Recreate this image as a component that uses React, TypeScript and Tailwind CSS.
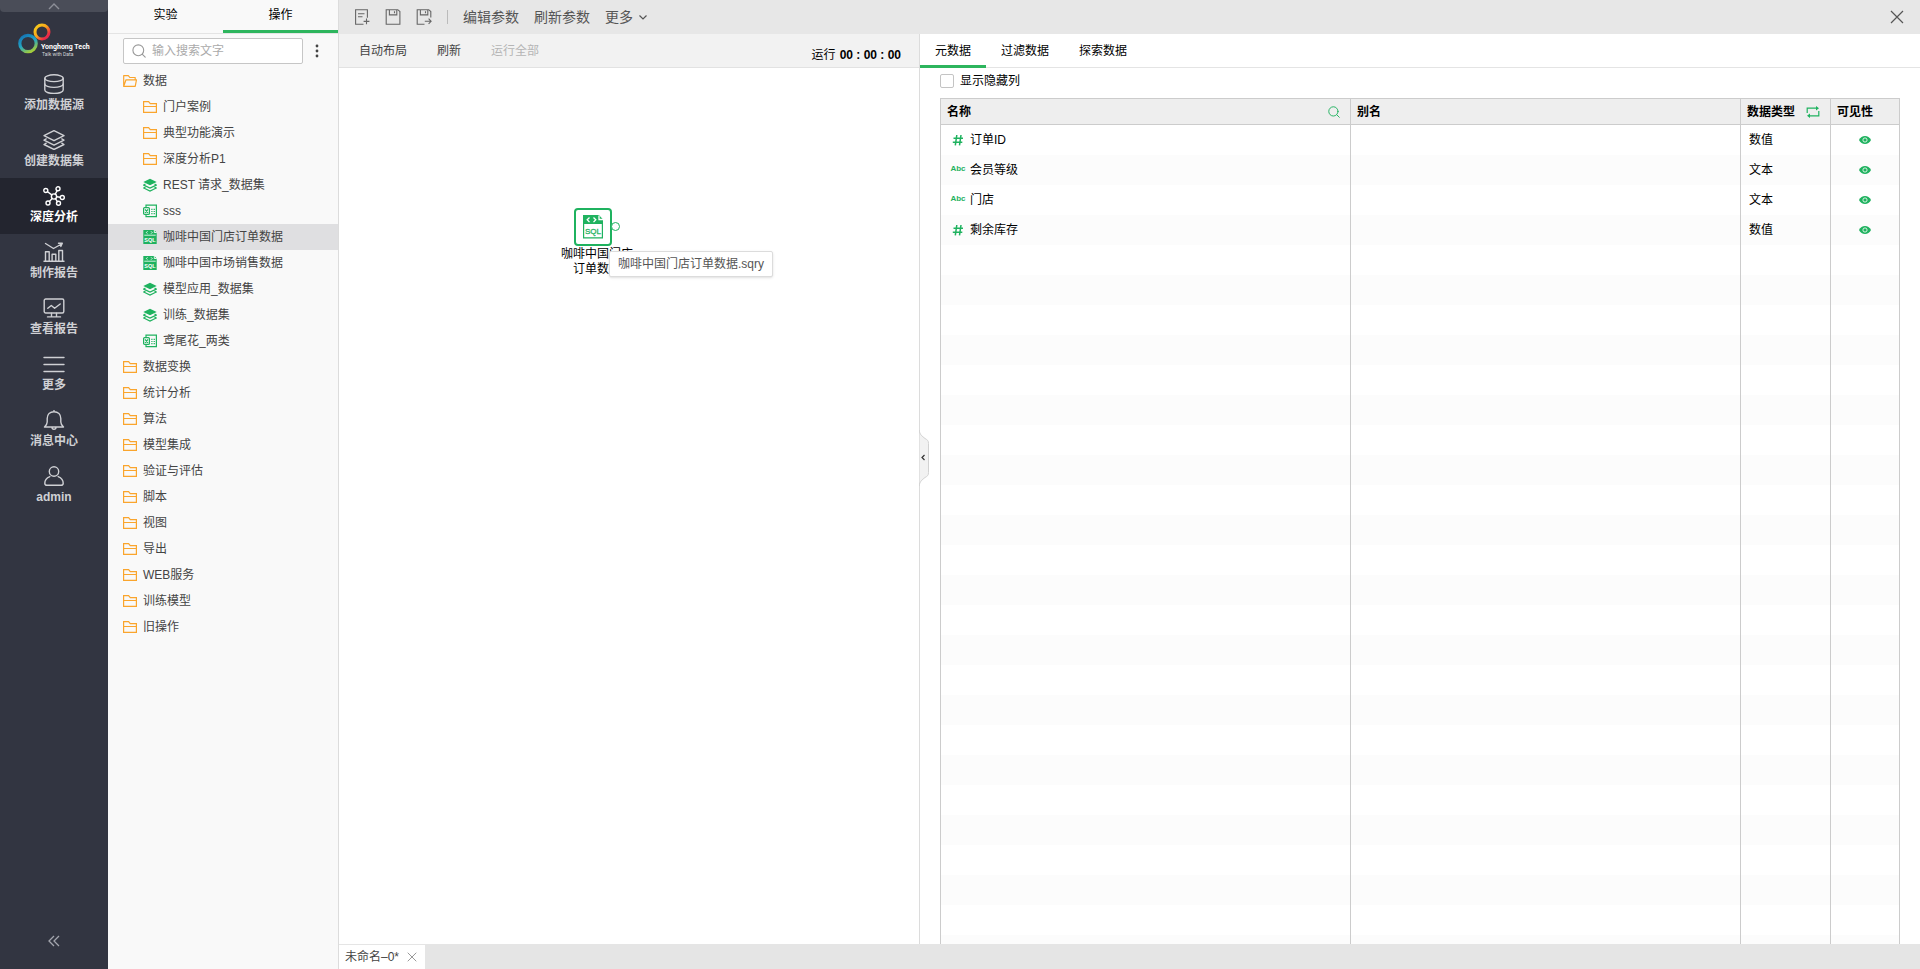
import React from "react";

type IconProps = { className?: string };

/* ---------- side navigation icons ---------- */

const NavSvg = ({ children }: { children: React.ReactNode }) => (
  <svg className="h-5 w-[22px]" viewBox="0 0 22 20" fill="none" stroke="currentColor" strokeWidth="1.4" strokeLinejoin="round" strokeLinecap="round">
    {children}
  </svg>
);

const DatabaseIcon = () => (
  <NavSvg>
    <ellipse cx="11" cy="4.2" rx="9.2" ry="3.4" />
    <path d="M1.8 4.2v11.9c0 1.9 4.1 3.4 9.2 3.4s9.2-1.500 9.200-3.400V4.200" />
    <path d="M1.800 10c0 1.900 4.100 3.400 9.200 3.400s9.200-1.500 9.200-3.400" />
  </NavSvg>
);

const LayersIcon = () => (
  <NavSvg>
    <path d="M11 .7 21 5.700 11 10.700 1 5.700z" />
    <path d="M3.200 8.900 1 10.100l10 5 10-5-2.200-1.200" />
    <path d="M3.200 13.200 1 14.500l10 5 10-5-2.200-1.300" />
  </NavSvg>
);

const GraphIcon = () => (
  <NavSvg>
    <circle cx="11" cy="10.500" r="2.600" />
    <circle cx="2.800" cy="4.500" r="2" />
    <circle cx="15" cy="2.800" r="2" />
    <circle cx="19.300" cy="11.500" r="2" />
    <circle cx="5" cy="17" r="2" />
    <circle cx="15.500" cy="17.300" r="2" />
    <path d="M4.500 5.700 8.800 8.900M14.200 4.700 12.200 8.100M13.600 10.800l3.700.5M9.200 12.500l-2.800 3M12.400 12.700l2 2.900" />
  </NavSvg>
);

const ReportIcon = () => (
  <NavSvg>
    <path d="M1 19.300h20M2.500 19V9.800h3.700V19M9.100 19v-6.800h3.700V19M15.800 19V8.500h3.700V19" />
    <path d="M2.500 1.500 10.500 6.500 18.500 2M15.500 1.200h3.800l-1.500 3.200" />
  </NavSvg>
);

const MonitorIcon = () => (
  <NavSvg>
    <rect x="1.200" y="1" width="19.600" height="14" rx="1.500" />
    <path d="M4.800 10.300 8.300 7.500l3.300 2.800 5.600-4.300M8.500 15.200v3.300M13.500 15.200v3.300M4.500 18.900h13" />
  </NavSvg>
);

const MoreIcon = () => (
  <NavSvg>
    <path d="M1 3.500h20M1 10.500h20M1 17.500h20" />
  </NavSvg>
);

const BellIcon = () => (
  <NavSvg>
    <path d="M1.500 17h19c-1.600-1.500-2.700-2.700-2.700-5V8.500C17.800 4.500 15 1.700 11 1.700S4.200 4.500 4.200 8.500V12c0 2.300-1.100 3.500-2.700 5zM11 .6v1M9 17.300c0 1.300.8 2 2 2s2-.7 2-2" />
  </NavSvg>
);

const UserIcon = () => (
  <NavSvg>
    <circle cx="11" cy="5.500" r="4.700" />
    <path d="M6.800 10.600C4 11.800 1.800 14.200 1.800 17.200c0 1.300.8 2.100 2.200 2.100h14c1.400 0 2.200-.8 2.200-2.100 0-3-2.200-5.400-5-6.600" />
  </NavSvg>
);

const Logo = () => (
  <svg className="h-9 w-20" viewBox="0 0 80 36" role="img" aria-label="Yonghong Tech">
    <defs>
      <linearGradient id="ringTop" x1="0" y1="0" x2="1" y2="1">
        <stop offset="0" stopColor="#f6d21c" />
        <stop offset="0.450" stopColor="#f9a41b" />
        <stop offset="0.800" stopColor="#ee2b45" />
        <stop offset="1" stopColor="#d8245a" />
      </linearGradient>
      <linearGradient id="ringBottom" x1="0.200" y1="0" x2="0.700" y2="1">
        <stop offset="0" stopColor="#1576b5" />
        <stop offset="0.500" stopColor="#22a5c4" />
        <stop offset="1" stopColor="#a5cd39" />
      </linearGradient>
    </defs>
    <circle cx="28" cy="10" r="7" fill="none" stroke="url(#ringTop)" strokeWidth="3" />
    <circle cx="14" cy="21.500" r="8.200" fill="none" stroke="url(#ringBottom)" strokeWidth="3.200" />
    <text x="27" y="27" fill="#ffffff" fontSize="7" fontWeight="700" fontFamily="Roboto, 'Liberation Sans', sans-serif">Yonghong Tech</text>
    <text x="28" y="34" fill="#d5d6da" fontSize="5" fontFamily="Roboto, 'Liberation Sans', sans-serif">Talk with Data</text>
  </svg>
);

/* ---------- tree icons ---------- */

const FolderIcon = () => (
  <svg className="h-3.5 w-3.5 shrink-0" viewBox="0 0 14 14" fill="none" stroke="#faa52d" strokeWidth="1.200">
    <path d="M.6 12.400V1.600h5l1.700 2h6.100v8.800zM.6 6.500h12.800" />
  </svg>
);

const FolderOpenIcon = () => (
  <svg className="h-3.5 w-3.5 shrink-0" viewBox="0 0 14 14" fill="none" stroke="#faa52d" strokeWidth="1.200" strokeLinejoin="round">
    <path d="M.7 12.400V1.600h4.600l1.500 1.900h5.400v2.300M.7 12.400 3 5.800h10.500l-1.300 6.600z" />
  </svg>
);

const DatasetIcon = () => (
  <svg className="h-3.5 w-3.5 shrink-0" viewBox="0 0 14 14" fill="none" stroke="#1fb25f" strokeWidth="1.200">
    <path d="M7 .8 13.700 4 7 7.200.3 4z" fill="#1fb25f" stroke="none" />
    <path d="M2.500 6.100.7 7.100 7 10.100l6.300-3-1.800-1M2.500 9 .7 10 7 13l6.300-3-1.800-1" />
  </svg>
);

const ExcelIcon = () => (
  <svg className="h-3.5 w-3.5 shrink-0" viewBox="0 0 14 14" fill="none" stroke="#1fb25f" strokeWidth="1.200">
    <path d="M3 3.200V1.200h10.400v11.400H3v-1.800" />
    <rect x=".6" y="3.600" width="5.800" height="6.800" rx="1" />
    <path d="m2 5.300 3 3.600M5 5.300 2 8.900M8.300 5.300h1.200M10.600 5.300h1.300M8.300 7.500h1.200M10.600 7.500h1.300M8.300 9.700h1.200M10.600 9.700h1.300" />
  </svg>
);

const SqlIcon = () => (
  <svg className="h-3.5 w-3.5 shrink-0" viewBox="0 0 14 14">
    <path d="M.3 0h11l2.400 2.500V14H.3z" fill="#1fb25f" />
    <path d="M4.500 1.300 3.300 2.500l1.200 1.200M8 1.300l1.200 1.200L8 3.700M11.300 0v2.500h2.400" fill="none" stroke="#fff" strokeWidth=".9" />
    <path d="M1.300 5.200h11.400" stroke="#fff" strokeWidth=".8" />
    <text x="7" y="11.700" fill="#fff" fontSize="5.500" fontWeight="700" textAnchor="middle" fontFamily="'Liberation Sans', sans-serif">SQL</text>
  </svg>
);

const SearchIcon = ({ className }: IconProps) => (
  <svg className={className} viewBox="0 0 14 14" fill="none" stroke="currentColor" strokeWidth="1.100" strokeLinecap="round">
    <circle cx="6.300" cy="6.300" r="5.400" />
    <path d="m10.400 10.400 2.800 2.800" />
  </svg>
);

const CloseIcon = ({ className }: IconProps) => (
  <svg className={className} viewBox="0 0 14 14" fill="none" stroke="currentColor" strokeWidth="1.200">
    <path d="m1 1 12 12M13 1 1 13" />
  </svg>
);

const EyeIcon = () => (
  <svg className="h-3 w-3" viewBox="0 0 12 12">
    <path d="M0 6c1.300-2.500 3.500-4 6-4s4.700 1.500 6 4c-1.300 2.500-3.500 4-6 4S1.300 8.500 0 6z" fill="#1fb25f" />
    <circle cx="6" cy="6" r="2.100" fill="none" stroke="#fff" strokeWidth=".8" />
  </svg>
);

/* ---------- data ---------- */

const navItems = [
  { label: "添加数据源", Icon: DatabaseIcon },
  { label: "创建数据集", Icon: LayersIcon },
  { label: "深度分析", Icon: GraphIcon, active: true },
  { label: "制作报告", Icon: ReportIcon },
  { label: "查看报告", Icon: MonitorIcon },
  { label: "更多", Icon: MoreIcon },
  { label: "消息中心", Icon: BellIcon },
  { label: "admin", Icon: UserIcon },
];

const treeItems = [
  { label: "数据", Icon: FolderOpenIcon },
  { label: "门户案例", Icon: FolderIcon, child: true },
  { label: "典型功能演示", Icon: FolderIcon, child: true },
  { label: "深度分析P1", Icon: FolderIcon, child: true },
  { label: "REST 请求_数据集", Icon: DatasetIcon, child: true },
  { label: "sss", Icon: ExcelIcon, child: true },
  { label: "咖啡中国门店订单数据", Icon: SqlIcon, child: true, selected: true },
  { label: "咖啡中国市场销售数据", Icon: SqlIcon, child: true },
  { label: "模型应用_数据集", Icon: DatasetIcon, child: true },
  { label: "训练_数据集", Icon: DatasetIcon, child: true },
  { label: "鸢尾花_两类", Icon: ExcelIcon, child: true },
  { label: "数据变换", Icon: FolderIcon },
  { label: "统计分析", Icon: FolderIcon },
  { label: "算法", Icon: FolderIcon },
  { label: "模型集成", Icon: FolderIcon },
  { label: "验证与评估", Icon: FolderIcon },
  { label: "脚本", Icon: FolderIcon },
  { label: "视图", Icon: FolderIcon },
  { label: "导出", Icon: FolderIcon },
  { label: "WEB服务", Icon: FolderIcon },
  { label: "训练模型", Icon: FolderIcon },
  { label: "旧操作", Icon: FolderIcon },
];

const columns = [
  { name: "订单ID", type: "数值" },
  { name: "会员等级", type: "文本" },
  { name: "门店", type: "文本" },
  { name: "剩余库存", type: "数值" },
];

const fillerRows = Array.from({ length: 24 }, (_, i) => i);

/* ---------- sections ---------- */

const SideNav = () => (
  <nav className="flex w-[108px] shrink-0 flex-col bg-[#323541]">
    <button aria-label="收起" className="flex h-3 items-center justify-center rounded-b-sm bg-[#4a4d58] text-[#8d8f98]">
      <svg className="h-2 w-3" viewBox="0 0 12 8" fill="none" stroke="currentColor" strokeWidth="1.400">
        <path d="m1 7 5-5 5 5" />
      </svg>
    </button>
    <div className="flex h-[54px] items-center pt-0.5 pl-3.5">
      <Logo />
    </div>
    {navItems.map(({ label, Icon, active }) => (
      <button
        key={label}
        className={
          active
            ? "flex h-14 flex-col items-center gap-[3px] bg-[#23252f] pt-2 text-white"
            : "flex h-14 flex-col items-center gap-[3px] pt-2 text-[#cfd0d4]"
        }
      >
        <Icon />
        <span className="text-xs leading-4 font-bold">{label}</span>
      </button>
    ))}
    <button aria-label="折叠菜单" className="mt-auto mb-5 flex h-4 items-center justify-center text-[#a3a5ad]">
      <svg className="h-3 w-3" viewBox="0 0 12 12" fill="none" stroke="currentColor" strokeWidth="1.300">
        <path d="M6 1 1 6l5 5M11 1 6 6l5 5" />
      </svg>
    </button>
  </nav>
);

const OperationPanel = () => (
  <aside className="flex w-[231px] shrink-0 flex-col border-r border-[#dcdcdc] bg-[#f9f9f9] text-xs">
    <div className="flex h-[34px] shrink-0 border-b border-[#e4e4e4] text-black">
      <button className="flex-1 pb-1">实验</button>
      <button className="flex-1 border-b-3 border-[#2db55d]">操作</button>
    </div>
    <div className="flex h-[34px] shrink-0 items-center pl-[15px]">
      <label className="flex h-[26px] w-[180px] items-center gap-1.5 rounded-xs border border-[#c6c6c6] bg-white px-2">
        <SearchIcon className="h-3.5 w-3.5 shrink-0 text-[#999]" />
        <input
          type="text"
          aria-label="搜索"
          placeholder="输入搜索文字"
          className="min-w-0 flex-1 bg-transparent text-xs outline-none placeholder:text-[#aaa]"
        />
      </label>
      <button aria-label="菜单" className="flex h-5 w-7 items-center justify-center text-[#444]">
        <svg className="h-3.5 w-1" viewBox="0 0 4 14" fill="currentColor">
          <circle cx="2" cy="2" r="1.400" />
          <circle cx="2" cy="7" r="1.400" />
          <circle cx="2" cy="12" r="1.400" />
        </svg>
      </button>
    </div>
    <ul className="text-[#444]">
      {treeItems.map(({ label, Icon, child, selected }) => (
        <li key={label}>
          <button
            className={
              selected
                ? "flex h-[26px] w-full items-center gap-1.5 bg-[#dfdfe1] pl-[35px]"
                : child
                  ? "flex h-[26px] w-full items-center gap-1.5 pl-[35px]"
                  : "flex h-[26px] w-full items-center gap-1.5 pl-[15px]"
            }
          >
            <Icon />
            <span>{label}</span>
          </button>
        </li>
      ))}
    </ul>
  </aside>
);

const Toolbar = () => (
  <header className="flex h-[34px] shrink-0 items-center bg-[#e7e7e7] pr-4 pl-[15px] text-sm text-[#555]">
    <div className="flex items-center gap-[15px] text-[#666]">
      <button aria-label="新建">
        <svg className="h-4 w-4" viewBox="0 0 16 16" fill="none" stroke="currentColor" strokeWidth="1.100">
          <path d="M9.500 15.300H1.600V.7h11.800v8M4 4.700h6.500M4 7.800h4.500M12.500 9.500v5.800M9.600 12.400h5.800" />
        </svg>
      </button>
      <button aria-label="保存">
        <svg className="h-4 w-4" viewBox="0 0 16 16" fill="none" stroke="currentColor" strokeWidth="1.100">
          <path d="M2 .7h10.800l2.100 1.800v12.800H1.200V.7zM4.400.7v5.200h7.400V.7M9.500 2.200v2" />
        </svg>
      </button>
      <button aria-label="另存为">
        <svg className="h-4 w-4" viewBox="0 0 16 16" fill="none" stroke="currentColor" strokeWidth="1.100">
          <path d="M8.500 15.300H1.200V.7h11.500l2.100 1.800v6M4.400.7v5.200h7.400V.7M9.500 2.200v2M8.800 12.300h6M12.600 9.700l2.500 2.600-2.500 2.600" />
        </svg>
      </button>
    </div>
    <div className="mx-[15px] h-3.5 w-px bg-[#bbb]" />
    <div className="flex items-center gap-[15px]">
      <button>编辑参数</button>
      <button>刷新参数</button>
      <button className="flex items-center gap-1.5">
        更多
        <svg className="h-2 w-2" viewBox="0 0 8 8" fill="none" stroke="currentColor" strokeWidth="1.200">
          <path d="m.5 2.500 3.500 3.500 3.500-3.500" />
        </svg>
      </button>
    </div>
    <button aria-label="关闭" className="ml-auto">
      <CloseIcon className="h-3.5 w-3.5" />
    </button>
  </header>
);

const Canvas = () => (
  <section className="flex w-[581px] shrink-0 flex-col border-r border-[#dcdcdc]">
    <div className="flex h-[34px] shrink-0 items-center border-b border-[#e2e2e2] bg-[#f2f2f2] pr-[18px] pl-5 text-xs">
      <div className="flex gap-[30px] text-[#444]">
        <button>自动布局</button>
        <button>刷新</button>
        <button disabled className="text-[#b5b5b5]">运行全部</button>
      </div>
      <div className="ml-auto flex gap-1 pt-2 text-black">
        <span>运行</span>
        <span className="font-bold">00 : 00 : 00</span>
      </div>
    </div>
    <div className="relative flex-1 overflow-hidden bg-white text-xs">
      <div className="absolute top-[140px] left-[235px] flex h-[38px] w-[38px] items-center justify-center rounded border-2 border-[#1fb25f] bg-white">
        <svg className="h-6 w-5" viewBox="0 0 20 24">
          <path d="M0 0h16l4 4.500V9H0z" fill="#1fb25f" />
          <path d="M.6 8.500v14.400h18.800V8.500" fill="none" stroke="#1fb25f" strokeWidth="1.200" />
          <path d="M6.500 2.500 4.200 4.800l2.300 2.300M10.500 2.500l2.300 2.300-2.300 2.300M16 .5v4h4" fill="none" stroke="#fff" strokeWidth="1.300" />
          <text x="10" y="18.500" fill="#1fb25f" stroke="#1fb25f" strokeWidth="0.300" fontSize="8" textAnchor="middle" fontFamily="'Liberation Sans', sans-serif">SQL</text>
        </svg>
      </div>
      <div className="absolute top-[154px] left-[272px] h-[9px] w-[9px] rounded-full border border-[#1fb25f] bg-white" />
      <p className="absolute top-[179px] left-[222px] w-[72px] text-center leading-[15px] break-all text-black">咖啡中国门店订单数据</p>
      <div role="tooltip" className="absolute top-[183px] left-[270px] rounded-xs border border-[#dcdcdc] bg-white px-2 py-1 leading-4 whitespace-nowrap text-[#555] shadow-sm">
        咖啡中国门店订单数据.sqry
      </div>
    </div>
  </section>
);

const MetadataPanel = () => (
  <section className="relative flex min-w-0 flex-1 flex-col bg-white text-xs text-black">
    <div className="flex h-[34px] shrink-0 border-b border-[#e4e4e4]">
      <button className="-mb-px border-b-3 border-[#2db55d] px-[15px] pt-[3px]">元数据</button>
      <button className="px-[15px]">过滤数据</button>
      <button className="px-[15px]">探索数据</button>
    </div>
    <button aria-label="展开" className="absolute top-[396px] -left-px h-14 w-2.5 text-[#333]">
      <svg className="h-14 w-2.5" viewBox="0 0 10 56" fill="none">
        <path d="M0 0C1 5 3 6 6 8.500c2.500 1.500 3.500 2 3.500 5v29c0 3-1 3.500-3.500 5C3 50 1 51 0 56z" fill="#f2f2f2" stroke="#d2d2d2" />
        <path d="m5.500 25-2.500 2.500L5.500 30" stroke="currentColor" strokeWidth="1.200" />
      </svg>
    </button>
    <div className="flex min-h-0 flex-1 flex-col px-5">
      <label className="flex h-[30px] shrink-0 items-center gap-1.5 pb-1">
        <input type="checkbox" className="h-3.5 w-3.5 appearance-none rounded-xs border border-[#c4c4c4] bg-white" />
        显示隐藏列
      </label>
      <div className="min-h-0 flex-1 overflow-hidden">
        <table className="w-full table-fixed border-collapse border border-[#ccc]">
          <colgroup>
            <col className="w-[410px]" />
            <col />
            <col className="w-[90px]" />
            <col className="w-[69px]" />
          </colgroup>
          <thead>
            <tr className="h-[26px] bg-[#eee] text-left">
              <th className="border border-[#ccc] p-0 px-1.5">
                <div className="flex items-center justify-between pr-1">
                  名称
                  <button aria-label="搜索名称" className="text-[#1fb25f]">
                    <SearchIcon className="h-3 w-3" />
                  </button>
                </div>
              </th>
              <th className="border border-[#ccc] p-0 px-1.5">别名</th>
              <th className="border border-[#ccc] p-0 px-1.5">
                <div className="flex items-center justify-between pr-1">
                  数据类型
                  <button aria-label="切换类型">
                    <svg className="h-3 w-3.5" viewBox="0 0 14 12" fill="none" stroke="#1fb25f" strokeWidth="1.200">
                      <path d="M1.200 7V2.200H11M12.800 5v4.800H3" />
                      <path d="m10 0 3 2.200-3 2.200zM4 7.600 1 9.800 4 12z" fill="#1fb25f" stroke="none" />
                    </svg>
                  </button>
                </div>
              </th>
              <th className="border border-[#ccc] p-0 px-1.5">可见性</th>
            </tr>
          </thead>
          <tbody>
            {columns.map(({ name, type }) => (
              <tr key={name} className="h-[30px] even:bg-[#fcfcfc]">
                <td className="border-x border-[#ccc] p-0 pl-[9px]">
                  <div className="flex items-center gap-1">
                    {type === "数值" ? (
                      <svg className="h-3.5 w-4" viewBox="0 0 16 14" fill="none" stroke="#1fb25f" strokeWidth="1.500">
                        <path d="M6.800 2 5.300 12.300M11 2 9.500 12.300M3.500 5.200h9.500M2.800 9.200h9.500" />
                      </svg>
                    ) : (
                      <span className="w-4 text-center text-[8px] font-bold text-[#1fb25f]">Abc</span>
                    )}
                    {name}
                  </div>
                </td>
                <td className="border-x border-[#ccc] p-0" />
                <td className="border-x border-[#ccc] p-0 pl-2">{type}</td>
                <td className="border-x border-[#ccc] p-0">
                  <button aria-label={`${name}可见性`} className="mx-auto flex">
                    <EyeIcon />
                  </button>
                </td>
              </tr>
            ))}
            {fillerRows.map((row) => (
              <tr key={row} className="h-[30px] even:bg-[#fcfcfc]">
                <td className="border-x border-[#ccc] p-0" />
                <td className="border-x border-[#ccc] p-0" />
                <td className="border-x border-[#ccc] p-0" />
                <td className="border-x border-[#ccc] p-0" />
              </tr>
            ))}
          </tbody>
        </table>
      </div>
    </div>
  </section>
);

export default function App() {
  return (
    <div className="flex h-screen overflow-hidden bg-white font-['Liberation_Sans','Noto_Sans_CJK_SC',sans-serif]">
      <SideNav />
      <OperationPanel />
      <main className="flex min-w-0 flex-1 flex-col">
        <Toolbar />
        <div className="flex min-h-0 flex-1">
          <Canvas />
          <MetadataPanel />
        </div>
        <footer className="flex h-[25px] shrink-0 bg-[#e5e5e5] text-xs text-[#444]">
          <div className="flex items-center gap-2 border-t border-[#e5e5e5] bg-white pr-2 pl-1.5">
            <span>未命名–0*</span>
            <button aria-label="关闭标签" className="text-[#888]">
              <CloseIcon className="h-2.5 w-2.5" />
            </button>
          </div>
        </footer>
      </main>
    </div>
  );
}
